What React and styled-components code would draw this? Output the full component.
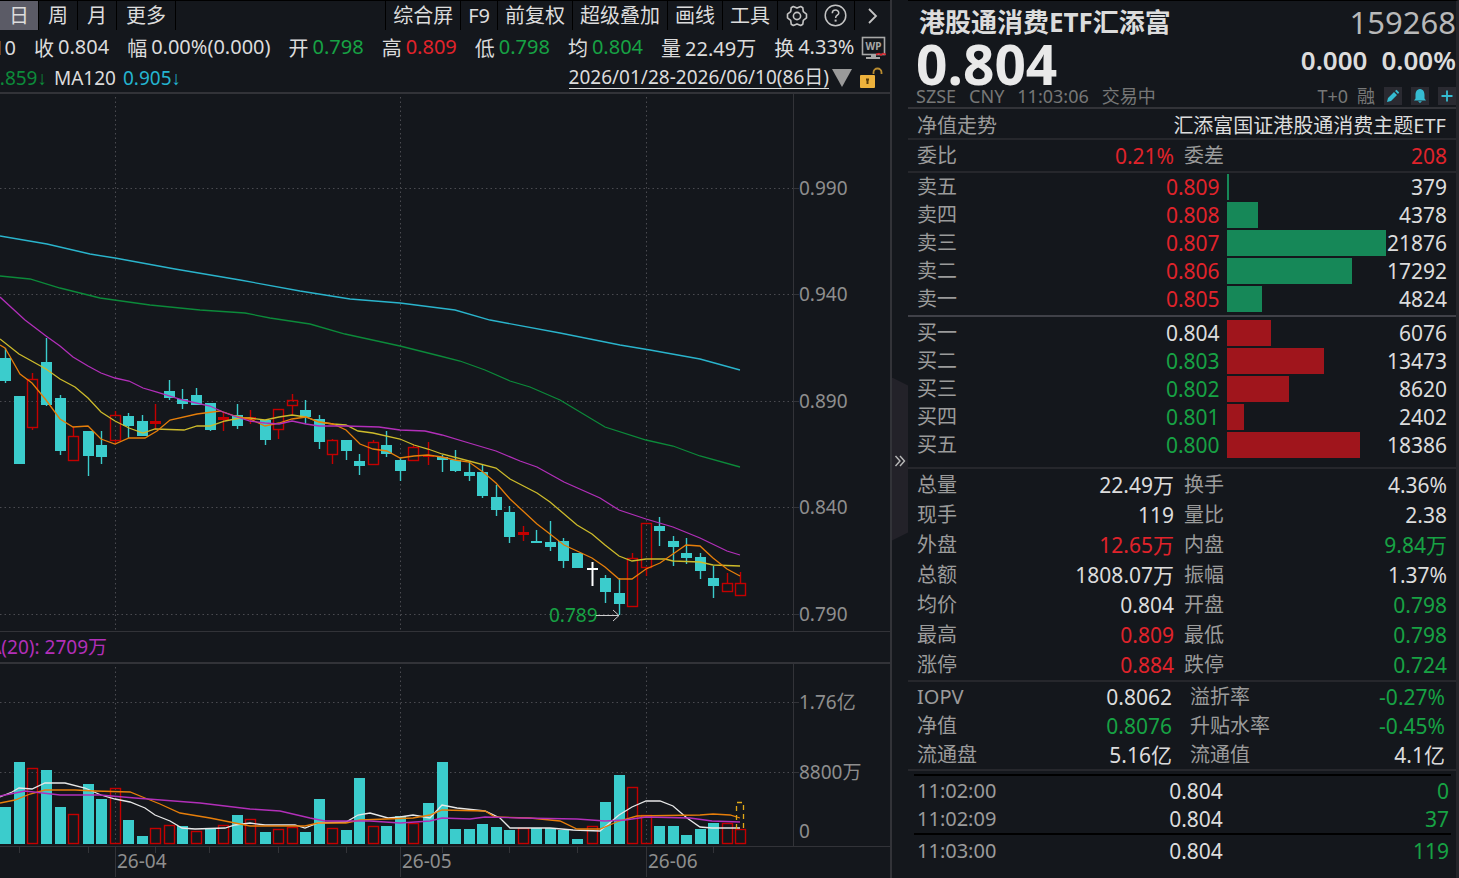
import React from "react";
import styled, { createGlobalStyle } from "styled-components";

const colors = {
  bg: "#14171c",
  line: "#323338",
  text: "#dcdcdc",
  label: "#9b9b9b",
  dim: "#777777",
  up: "#e0232b",
  down: "#17a244",
  cyan: "#3bcccc",
  candle: "#c40000",
  orange: "#e67e0a",
  yellow: "#cdbb2b",
  purple: "#b22fb9",
};

const tones = {
  up: colors.up,
  down: colors.down,
  flat: colors.text,
};

const GlobalStyle = createGlobalStyle`
  * {
    box-sizing: border-box;
  }
  body {
    margin: 0;
    background: ${colors.bg};
    color: ${colors.text};
    font-family: "Noto Sans", "Noto Sans CJK SC", sans-serif;
    font-size: 20px;
  }
  button {
    font: inherit;
    color: inherit;
    background: none;
    border: 0;
    padding: 0;
  }
`;

const Page = styled.div`
  display: grid;
  grid-template-columns: 892fr 16px 551fr;
  min-height: 100vh;
`;

/* chart side */
const ChartSide = styled.main`
  display: flex;
  flex-direction: column;
  min-width: 0;
  overflow: hidden;
  border-right: 2px solid ${colors.line};
`;

const Toolbar = styled.nav`
  display: flex;
  height: 30px;
  border-top: 1px solid #000;
  white-space: nowrap;
`;

const ToolGroup = styled.div`
  display: flex;
  &:last-child {
    margin-left: auto;
    border-left: 1px solid #000;
  }
`;

const ToolButton = styled.button`
  display: flex;
  align-items: center;
  justify-content: center;
  padding: 0 ${(props) => (props.$wide ? 9 : 7)}px;
  line-height: 28px;
  border-right: 1px solid #000;
  background: ${(props) => (props.$active ? "#5b5b66" : "none")};
  &:last-child {
    border-right: ${(props) => (props.$wide ? "1px solid #000" : 0)};
  }
`;

const QuoteLine = styled.div`
  display: flex;
  align-items: center;
  gap: 18px;
  height: 33px;
  padding-top: 2px;
  white-space: nowrap;
`;

const Clipped = styled.span`
  display: flex;
  justify-content: flex-end;
  width: ${(props) => props.$width}px;
  overflow: hidden;
  white-space: nowrap;
  flex: none;
`;

const QuoteItem = styled.span`
  display: flex;
  gap: 4px;
`;

const Value = styled.span`
  color: ${(props) => tones[props.$tone || "flat"]};
`;

const TerminalIcon = styled.svg`
  margin-left: -11px;
  flex: none;
`;

const AverageLine = styled.div`
  display: flex;
  align-items: center;
  gap: 7px;
  height: 31px;
  padding-right: 7px;
  font-size: 19px;
  border-bottom: 2px solid ${colors.line};
  white-space: nowrap;
`;

const Average = styled.span`
  color: ${(props) => props.$color};
`;

const Arrow = styled.span`
  font-family: "Liberation Sans", sans-serif;
  font-weight: bold;
`;

const RangeButton = styled.button`
  display: flex;
  align-items: center;
  gap: 3px;
  margin-left: auto;
`;

const RangeText = styled.span`
  line-height: 22px;
  border-bottom: 1px solid ${colors.text};
`;

const Chart = styled.svg`
  display: block;
  width: 100%;
  height: auto;
  font-size: 19px;
`;

const VolumeTitle = styled.div`
  height: 32px;
  line-height: 30px;
  font-size: 19px;
  color: ${colors.purple};
  border-bottom: 2px solid ${colors.line};
`;

/* collapse handle */
const Gutter = styled.div`
  min-width: 0;
`;

const Handle = styled.button`
  display: block;
  width: 16px;
  height: 163px;
  margin-top: 43vh;
  background: #232229;
  clip-path: polygon(0 0, 100% 8px, 100% 155px, 0 100%);
`;

/* quote side */
const QuoteSide = styled.aside`
  min-width: 0;
  border-top: 1px solid #000;
  border-right: 3px solid #24252a;
  white-space: nowrap;
`;

const Head = styled.header`
  height: 108px;
  padding-left: 8px;
  border-bottom: 2px solid ${colors.line};
`;

const Between = styled.div`
  display: flex;
  justify-content: space-between;
  align-items: center;
`;

const Title = styled.h1`
  margin: 0 0 0 3px;
  font-size: 26px;
  line-height: 42px;
  font-weight: 700;
`;

const Code = styled.span`
  font-size: 31px;
  line-height: 40px;
  color: #b9b9b9;
`;

const Price = styled.strong`
  font-size: 55px;
  line-height: 42px;
  color: #e9e9e9;
`;

const Change = styled.strong`
  display: flex;
  gap: 14px;
  font-size: 26px;
  line-height: 34px;
  font-weight: 600;
  align-self: flex-start;
`;

const Meta = styled.div`
  display: flex;
  align-items: center;
  gap: ${(props) => props.$gap}px;
  font-size: 18px;
  line-height: 22px;
  color: ${colors.dim};
`;

const MiniButton = styled.button`
  display: flex;
  align-items: center;
  justify-content: center;
  width: 18px;
  height: 18px;
  background: #2a2a31;
`;

const FundRow = styled(Between)`
  height: 31px;
  padding: 2px 10px 0 9px;
  border-bottom: 2px solid #26272c;
`;

const Label = styled.span`
  color: ${colors.label};
`;

const Section = styled.section`
  padding: ${(props) => props.$pad || "0"};
  border-bottom: ${(props) => (props.$strong ? "2px solid #404148" : "2px solid #26272c")};
  &:last-child {
    border-bottom: 0;
  }
`;

const Table = styled.table`
  width: 100%;
  table-layout: fixed;
  border-collapse: collapse;
`;

const Row = styled.tr`
  height: ${(props) => props.$height}px;
`;

const Name = styled.th`
  width: ${(props) => props.$width};
  padding: 0 0 0 ${(props) => props.$indent || 0}px;
  font-size: 20px;
  line-height: 26px;
  font-weight: 400;
  text-align: left;
  color: ${colors.label};
`;

const Num = styled.td`
  width: ${(props) => props.$width};
  padding: 0 ${(props) => props.$inset || 0}px 0 0;
  font-size: 21px;
  line-height: 26px;
  text-align: right;
  color: ${(props) => tones[props.$tone || "flat"]};
`;

const BarCell = styled.td`
  width: 31.3%;
  padding: 0 0 0 7px;
`;

const Bar = styled.div`
  height: 26px;
  min-width: 2px;
  background: ${(props) => (props.$side === "sell" ? "#168858" : "#a0151c")};
`;

const TickGroup = styled.div`
  margin: 0 5px 0 6px;
  padding: 1px 2px 0 3px;
  border-top: 2px solid #000;
`;

const quotes = [
  ["收", "0.804", "flat"],
  ["幅", "0.00%(0.000)", "flat"],
  ["开", "0.798", "down"],
  ["高", "0.809", "up"],
  ["低", "0.798", "down"],
  ["均", "0.804", "down"],
  ["量", "22.49万", "flat"],
  ["换", "4.33%", "flat"],
];

const asks = [
  ["卖五", "0.809", "up", 379],
  ["卖四", "0.808", "up", 4378],
  ["卖三", "0.807", "up", 21876],
  ["卖二", "0.806", "up", 17292],
  ["卖一", "0.805", "up", 4824],
];

const bids = [
  ["买一", "0.804", "flat", 6076],
  ["买二", "0.803", "down", 13473],
  ["买三", "0.802", "down", 8620],
  ["买四", "0.801", "down", 2402],
  ["买五", "0.800", "down", 18386],
];

const ratio = [["委比", "0.21%", "up", "委差", "208", "up"]];

const stats = [
  ["总量", "22.49万", "flat", "换手", "4.36%", "flat"],
  ["现手", "119", "flat", "量比", "2.38", "flat"],
  ["外盘", "12.65万", "up", "内盘", "9.84万", "down"],
  ["总额", "1808.07万", "flat", "振幅", "1.37%", "flat"],
  ["均价", "0.804", "flat", "开盘", "0.798", "down"],
  ["最高", "0.809", "up", "最低", "0.798", "down"],
  ["涨停", "0.884", "up", "跌停", "0.724", "down"],
];

const fundStats = [
  ["IOPV", "0.8062", "flat", "溢折率", "-0.27%", "down"],
  ["净值", "0.8076", "down", "升贴水率", "-0.45%", "down"],
  ["流通盘", "5.16亿", "flat", "流通值", "4.1亿", "flat"],
];

// x, kind (c = down, r = up, w = flat), high, low, body top, body bottom, volume top, volume kind
const candles = [
  [5, "c", 348, 383, 358, 381, 807],
  [19, "c", 396, 464, 396, 464, 762],
  [32, "r", 373, 430, 379, 428, 768],
  [46, "c", 338, 406, 362, 405, 770],
  [60, "c", 395, 455, 398, 451, 807],
  [73, "r", 427, 461, 436, 461, 814],
  [88, "c", 431, 476, 431, 456, 784],
  [101, "c", 431, 464, 445, 457, 799],
  [115, "r", 411, 444, 415, 441, 788],
  [128, "c", 413, 438, 416, 426, 820],
  [142, "c", 415, 436, 421, 436, 836],
  [155, "r", 404, 429, 421, 424, 828],
  [169, "c", 380, 400, 391, 398, 825, "r"],
  [182, "c", 389, 409, 399, 404, 826],
  [196, "c", 388, 405, 395, 405, 831, "r"],
  [210, "c", 403, 431, 403, 430, 829],
  [223, "r", 413, 431, 417, 420, 825],
  [237, "c", 404, 429, 415, 426, 815],
  [250, "r", 410, 424, 417, 420, 819],
  [265, "c", 420, 445, 420, 440, 832],
  [278, "r", 409, 439, 409, 430, 829],
  [292, "r", 394, 415, 400, 406, 827],
  [305, "c", 400, 424, 410, 417, 832],
  [319, "c", 415, 449, 419, 442, 799],
  [332, "r", 439, 464, 440, 455, 828],
  [346, "c", 440, 460, 440, 451, 830],
  [359, "c", 454, 475, 461, 466, 778],
  [373, "r", 440, 465, 442, 465, 826],
  [386, "c", 431, 457, 445, 454, 826],
  [400, "c", 458, 481, 460, 471, 816],
  [413, "r", 445, 461, 447, 461, 823],
  [428, "r", 442, 465, 455, 457, 803, "c"],
  [442, "c", 455, 472, 457, 460, 762],
  [455, "c", 450, 472, 460, 471, 829],
  [469, "c", 461, 481, 472, 476, 829],
  [482, "c", 465, 498, 472, 496, 824],
  [496, "c", 485, 516, 497, 510, 827],
  [509, "c", 506, 543, 512, 537, 830],
  [523, "r", 526, 541, 532, 535, 828],
  [536, "c", 530, 543, 541, 543, 828],
  [550, "c", 521, 551, 542, 547, 828],
  [563, "c", 538, 568, 541, 561, 830],
  [577, "c", 553, 568, 553, 568, 839],
  [592, "w", 562, 586, 568, 570, 826, "r"],
  [605, "c", 575, 603, 578, 592, 802],
  [619, "c", 578, 615, 593, 604, 775],
  [632, "r", 553, 607, 558, 607, 787],
  [646, "r", 523, 576, 523, 568, 815],
  [659, "c", 517, 546, 526, 531, 826],
  [673, "c", 536, 566, 541, 547, 826],
  [686, "c", 538, 564, 553, 558, 835],
  [700, "c", 553, 579, 557, 571, 829],
  [713, "c", 566, 598, 578, 586, 823],
  [727, "r", 573, 592, 583, 592, 823],
  [740, "r", 572, 596, 583, 596, 829],
];

const averages = [
  ["#2ab4cc", "0,236 47,244 90,254 115,258 175,269 240,280 300,291 350,299 400,303 455,310 490,320 560,333 620,345 650,350 700,359 740,370"],
  ["#0c8a3a", "0,276 30,279 60,288 100,298 150,305 200,310 245,313 270,318 310,324 345,334 400,346 440,356 460,361 485,370 510,381 530,387 560,400 605,427 646,440 673,446 700,456 740,467"],
  [colors.yellow, "0,339 19,354 46,369 60,379 75,387 88,398 101,412 115,421 129,428 143,433 155,429 184,430 197,426 210,426 225,421 240,418 250,418 265,420 279,417 292,415 306,417 319,422 333,424 346,425 358,431 373,433 400,439 414,445 428,449 442,454 469,461 496,468 510,479 537,493 550,502 577,525 592,534 605,545 619,556 632,561 646,559 665,559 673,561 700,562 713,565 740,566"],
  [colors.orange, "0,345 5,348 12,360 20,374 32,383 46,400 60,419 73,427 88,426 101,439 115,444 129,438 145,438 157,431 170,420 197,414 220,411 235,416 250,419 265,426 279,423 292,419 306,417 319,422 333,424 346,430 360,444 373,449 387,451 400,458 414,456 428,455 442,457 455,460 469,462 483,472 496,483 510,499 523,511 537,524 550,534 564,545 577,551 592,558 605,567 619,579 632,579 646,569 660,563 673,554 686,545 700,546 713,558 727,569 740,576"],
  [colors.purple, "0,297 25,320 46,336 60,346 73,357 88,366 101,373 115,378 129,381 143,388 157,392 183,400 210,406 223,412 237,417 250,421 265,423 279,424 292,421 306,424 319,426 346,426 379,427 400,430 425,431 442,435 469,443 496,451 520,461 537,467 564,482 600,498 619,510 646,519 673,527 700,538 727,551 740,555"],
];

const volumeAverages = [
  ["#e8e8e8", "0,797 12,792 19,788 32,789 45,783 65,783 85,788 101,795 115,799 130,802 145,808 155,815 170,821 182,828 195,829 225,828 235,825 250,823 265,825 295,825 305,828 318,823 346,822 358,815 370,813 388,818 400,817 413,815 430,818 442,805 457,808 485,811 500,818 510,828 550,828 573,830 600,831 619,815 632,807 646,801 660,801 673,806 687,818 700,827 712,828 740,828"],
  [colors.orange, "0,803 15,800 30,794 45,790 75,790 95,791 130,792 145,798 160,804 180,813 210,818 235,823 250,826 305,826 318,823 346,823 360,820 413,818 430,815 442,810 485,811 495,817 530,818 560,821 577,829 600,829 619,821 637,816 700,815 713,814 730,815 740,818"],
  [colors.purple, "0,796 25,791 60,795 100,795 135,798 200,803 250,809 280,811 310,818 325,821 370,821 400,823 430,821 442,818 470,819 485,817 520,818 577,819 605,821 625,820 646,817 690,818 712,821 740,822"],
];

const priceTicks = [
  [188, "0.990"],
  [294, "0.940"],
  [401, "0.890"],
  [507, "0.840"],
  [614, "0.790"],
];

const months = [
  [115, "26-04"],
  [400, "26-05"],
  [646, "26-06"],
];

const weekTicks = [19, 88, 155, 209, 278, 346, 442, 509, 577, 713];

function Grid({ rows, top, bottom }) {
  return (
    <g stroke="#4a4b50" strokeDasharray="1.5 3">
      {rows.map((y) => (
        <line key={y} x1="0" x2="793" y1={y + 0.5} y2={y + 0.5} />
      ))}
      {months.map(([x]) => (
        <line key={x} x1={x + 0.5} x2={x + 0.5} y1={top} y2={bottom} />
      ))}
    </g>
  );
}

function Candle({ data }) {
  const [x, kind, high, low, top, bottom] = data;
  const hollow = kind === "r" && bottom - top > 3;
  const color = { c: colors.cyan, r: colors.candle, w: "#ffffff" }[kind];
  const mid = x + 0.5;
  return (
    <g fill={color} stroke={color} strokeWidth="1.4">
      {hollow ? (
        <>
          {top > high && <path d={`M${mid} ${high}V${top}`} />}
          {low > bottom && <path d={`M${mid} ${bottom}V${low}`} />}
          <rect x={x - 4.5} y={top + 0.5} width="10" height={bottom - top - 1} fill="none" />
        </>
      ) : (
        <>
          <path d={`M${mid} ${high}V${low}`} strokeWidth={kind === "w" ? 2 : 1.4} />
          <rect x={x - 5} y={top} width="11" height={bottom - top} stroke="none" />
        </>
      )}
    </g>
  );
}

function VolumeBar({ data }) {
  const [x, kind, , , , , top, volumeKind] = data;
  if ((volumeKind || kind) === "r") {
    return (
      <rect x={x - 4.5} y={top + 0.5} width="10" height={843 - top} fill="none" stroke={colors.candle} strokeWidth="1.4" />
    );
  }
  return <rect x={x - 5} y={top} width="11" height={844 - top} fill={colors.cyan} />;
}

function PriceChart() {
  return (
    <Chart viewBox="0 94 890 538" role="img" aria-label="K线图">
      <Grid rows={priceTicks.map((t) => t[0])} top={97} bottom={630} />
      <g fill={colors.line}>
        <rect x="793" y="94" width="1" height="537" />
        <rect x="0" y="631" width="890" height="1" />
        {priceTicks.map(([y]) => (
          <rect key={y} x="793" y={y} width="6" height="1" />
        ))}
      </g>
      <g fill="#8e8e8e">
        {priceTicks.map(([y, label]) => (
          <text key={y} x="799" y={y + 7}>
            {label}
          </text>
        ))}
      </g>
      {candles.map((data) => (
        <Candle key={data[0]} data={data} />
      ))}
      {averages.map(([color, points]) => (
        <polyline key={color} points={points} fill="none" stroke={color} strokeWidth="1.3" />
      ))}
      <text x="549" y="622" fill={colors.down}>
        0.789
      </text>
      <path d="M596 615.5h23M613 610l6 5.5-6 5.5" fill="none" stroke="#cccccc" />
    </Chart>
  );
}

function VolumeChart() {
  return (
    <Chart viewBox="0 664 890 214" role="img" aria-label="成交量">
      <Grid rows={[702, 772]} top={667} bottom={844} />
      <g fill={colors.line}>
        <rect x="793" y="664" width="1" height="182" />
        <rect x="793" y="702" width="6" height="1" />
        <rect x="793" y="772" width="6" height="1" />
        <rect x="0" y="846" width="890" height="1" />
        {weekTicks.map((x) => (
          <rect key={x} x={x} y="847" width="1" height="6" />
        ))}
        {months.map(([x]) => (
          <rect key={x} x={x} y="847" width="1" height="30" />
        ))}
      </g>
      <g fill="#8e8e8e">
        <text x="799" y="709">1.76亿</text>
        <text x="799" y="779">8800万</text>
        <text x="799" y="838">0</text>
        {months.map(([x, label]) => (
          <text key={x} x={x + 2} y="868">
            {label}
          </text>
        ))}
      </g>
      {candles.map((data) => (
        <VolumeBar key={data[0]} data={data} />
      ))}
      {volumeAverages.map(([color, points]) => (
        <polyline key={color} points={points} fill="none" stroke={color} strokeWidth="1.3" />
      ))}
      <path d="M736.5 829v-26.5h7v26.5" fill="none" stroke="#e0a818" strokeWidth="1.3" strokeDasharray="5 4" />
    </Chart>
  );
}

function GearIcon() {
  return (
    <svg width="24" height="24" viewBox="0 0 24 24" fill="none" stroke="#c4c4c4" strokeWidth="1.6" strokeLinejoin="round">
      <path d="M8.3 2.500l3.700 1.600 3.700-1.600 2.100 1.300.5 3.800 3.200 2.500v3.800l-3.200 2.500-.5 3.800-2.100 1.300-3.700-1.600-3.700 1.600-2.100-1.300-.5-3.800-3.200-2.500v-3.800l3.200-2.500.5-3.800z" />
      <circle cx="12" cy="12" r="3.6" />
    </svg>
  );
}

function HelpIcon() {
  return (
    <svg width="23" height="23" viewBox="0 0 23 23" fill="none" stroke="#c4c4c4" strokeWidth="1.5">
      <circle cx="11.5" cy="11.5" r="10.3" />
      <path d="M8.3 9.200c0-4.200 6.500-4 6.500-.3 0 2.300-3.200 2.300-3.200 5" />
      <path d="M11.6 15.600v2" strokeWidth="2" />
    </svg>
  );
}

function StatTable({ rows, height, inset = 0, indent = 10 }) {
  return (
    <Table>
      <tbody>
        {rows.map(([name, value, tone, name2, value2, tone2]) => (
          <Row key={name} $height={height}>
            <Name $width="19%">{name}</Name>
            <Num $width="29.5%" $tone={tone} $inset={inset}>
              {value}
            </Num>
            <Name $width="21%" $indent={indent}>
              {name2}
            </Name>
            <Num $width="30.5%" $tone={tone2} $inset={inset}>
              {value2}
            </Num>
          </Row>
        ))}
      </tbody>
    </Table>
  );
}

function OrderTable({ rows, side }) {
  return (
    <Table>
      <tbody>
        {rows.map(([name, price, tone, amount]) => (
          <Row key={name} $height={28}>
            <Name $width="19%">{name}</Name>
            <Num $width="38.1%" $tone={tone}>
              {price}
            </Num>
            <BarCell>
              <Bar $side={side} style={{ width: `${(amount / 21876) * 100}%` }} />
            </BarCell>
            <Num $width="11.6%">{amount}</Num>
          </Row>
        ))}
      </tbody>
    </Table>
  );
}

function TickTable({ rows, height }) {
  return (
    <TickGroup>
      <Table>
        <tbody>
          {rows.map(([time, price, amount]) => (
            <Row key={time} $height={height}>
              <Name $width="30%">{time}</Name>
              <Num $width="27.5%">{price}</Num>
              <Num $width="42.5%" $tone="down">
                {amount}
              </Num>
            </Row>
          ))}
        </tbody>
      </Table>
    </TickGroup>
  );
}

export default function App() {
  return (
    <Page>
      <GlobalStyle />
      <ChartSide>
        <Toolbar>
          <ToolGroup>
            <ToolButton $active $wide>
              日
            </ToolButton>
            <ToolButton $wide>周</ToolButton>
            <ToolButton $wide>月</ToolButton>
            <ToolButton $wide>更多</ToolButton>
          </ToolGroup>
          <ToolGroup>
            <ToolButton>综合屏</ToolButton>
            <ToolButton>F9</ToolButton>
            <ToolButton>前复权</ToolButton>
            <ToolButton>超级叠加</ToolButton>
            <ToolButton>画线</ToolButton>
            <ToolButton>工具</ToolButton>
            <ToolButton aria-label="设置">
              <GearIcon />
            </ToolButton>
            <ToolButton aria-label="帮助">
              <HelpIcon />
            </ToolButton>
            <ToolButton aria-label="展开">
              <svg width="21" height="20" viewBox="0 0 21 20" fill="none" stroke="#c4c4c4" strokeWidth="1.8">
                <path d="M7 3l7 7-7 7" />
              </svg>
            </ToolButton>
          </ToolGroup>
        </Toolbar>
        <QuoteLine>
          <Clipped $width={16}>10</Clipped>
          {quotes.map(([name, value, tone]) => (
            <QuoteItem key={name}>
              <span>{name}</span>
              <Value $tone={tone}>{value}</Value>
            </QuoteItem>
          ))}
          <TerminalIcon width="26" height="24" viewBox="0 0 26 24">
            <rect x="1.5" y="1.5" width="22" height="17" fill="none" stroke="#a8a8a8" strokeWidth="1.6" />
            <text x="12.5" y="14" fontSize="10" fontWeight="700" textAnchor="middle" fill="#a8a8a8">
              WP
            </text>
            <path d="M10 19h5v2h4v2H5v-2h5z" fill="#a8a8a8" />
            <path d="M15 18.500l3-1 2 1.500 2-1.500 3 1" fill="none" stroke="#d8232b" strokeWidth="1.5" />
          </TerminalIcon>
        </QuoteLine>
        <AverageLine>
          <Clipped $width={47}>
            <Average $color="#0c8a3a">
              0.859<Arrow>↓</Arrow>
            </Average>
          </Clipped>
          <span>MA120</span>
          <Average $color="#24b4d0">
            0.905<Arrow>↓</Arrow>
          </Average>
          <RangeButton>
            <RangeText>2026/01/28-2026/06/10(86日)</RangeText>
            <svg width="20" height="18" viewBox="0 0 20 18">
              <path d="M0 0h20L10 18z" fill="#9a9a9a" />
            </svg>
          </RangeButton>
          <svg width="24" height="22" viewBox="0 0 24 22">
            <rect x="1" y="8" width="15" height="13" rx="1" fill="#eeb23c" />
            <path d="M8.500 12v5M7 12.500h3" stroke="#5a3d08" strokeWidth="2" />
            <path d="M14.500 7V5.500a4 4 0 0 1 8 0V7" fill="none" stroke="#b98c30" strokeWidth="1.8" />
          </svg>
        </AverageLine>
        <PriceChart />
        <VolumeTitle>
          <Clipped $width={107}>MA(20): 2709万</Clipped>
        </VolumeTitle>
        <VolumeChart />
      </ChartSide>

      <Gutter>
        <Handle aria-label="收起">
          <svg width="12" height="12" viewBox="0 0 12 12" fill="none" stroke="#b8b8b8" strokeWidth="1.4">
            <path d="M1.500 1l4.500 5-4.500 5M6 1l4.500 5L6 11" />
          </svg>
        </Handle>
      </Gutter>

      <QuoteSide>
        <Head>
          <Between>
            <Title>港股通消费ETF汇添富</Title>
            <Code>159268</Code>
          </Between>
          <Between>
            <Price>0.804</Price>
            <Change>
              <span>0.000</span>
              <span>0.00%</span>
            </Change>
          </Between>
          <Between>
            <Meta $gap={13}>
              <span>SZSE</span>
              <span>CNY</span>
              <span>11:03:06</span>
              <span>交易中</span>
            </Meta>
            <Meta $gap={9}>
              <span>T+0</span>
              <span>融</span>
              <MiniButton aria-label="编辑">
                <svg width="14" height="14" viewBox="0 0 14 14" fill="#35bcd2">
                  <path d="M1 13l1-4 6-6 3 3-6 6zM9 2l1.500-1.200L13.200 3.500 12 5z" />
                </svg>
              </MiniButton>
              <MiniButton aria-label="提醒">
                <svg width="14" height="14" viewBox="0 0 14 14" fill="#35bcd2">
                  <path d="M7 0c3.500.6 4.500 3 4.500 6v3.500L13 11.500H1l1.500-2V6C2.500 3 3.500.6 7 0zM5 12.200h4L7 14z" />
                </svg>
              </MiniButton>
              <MiniButton aria-label="添加">
                <svg width="14" height="14" viewBox="0 0 14 14" stroke="#35bcd2" strokeWidth="1.8">
                  <path d="M7 1.500v11M1.500 7h11" />
                </svg>
              </MiniButton>
            </Meta>
          </Between>
        </Head>
        <FundRow>
          <Label>净值走势</Label>
          <span>汇添富国证港股通消费主题ETF</span>
        </FundRow>
        <Section $pad="1px 9px 0 9px">
          <StatTable rows={ratio} height={30} />
        </Section>
        <Section $pad="0 9px 2px 9px" $strong>
          <OrderTable rows={asks} side="sell" />
        </Section>
        <Section $pad="2px 9px 8px 9px">
          <OrderTable rows={bids} side="buy" />
        </Section>
        <Section $pad="1px 9px 0 9px">
          <StatTable rows={stats} height={30} />
        </Section>
        <Section $pad="0 9px 0 9px">
          <StatTable rows={fundStats} height={29} inset={2} indent={16} />
        </Section>
        <Section $pad="3px 0 0 0">
          <TickTable
            height={28}
            rows={[
              ["11:02:00", "0.804", "0"],
              ["11:02:09", "0.804", "37"],
            ]}
          />
          <TickTable height={30} rows={[["11:03:00", "0.804", "119"]]} />
        </Section>
      </QuoteSide>
    </Page>
  );
}
